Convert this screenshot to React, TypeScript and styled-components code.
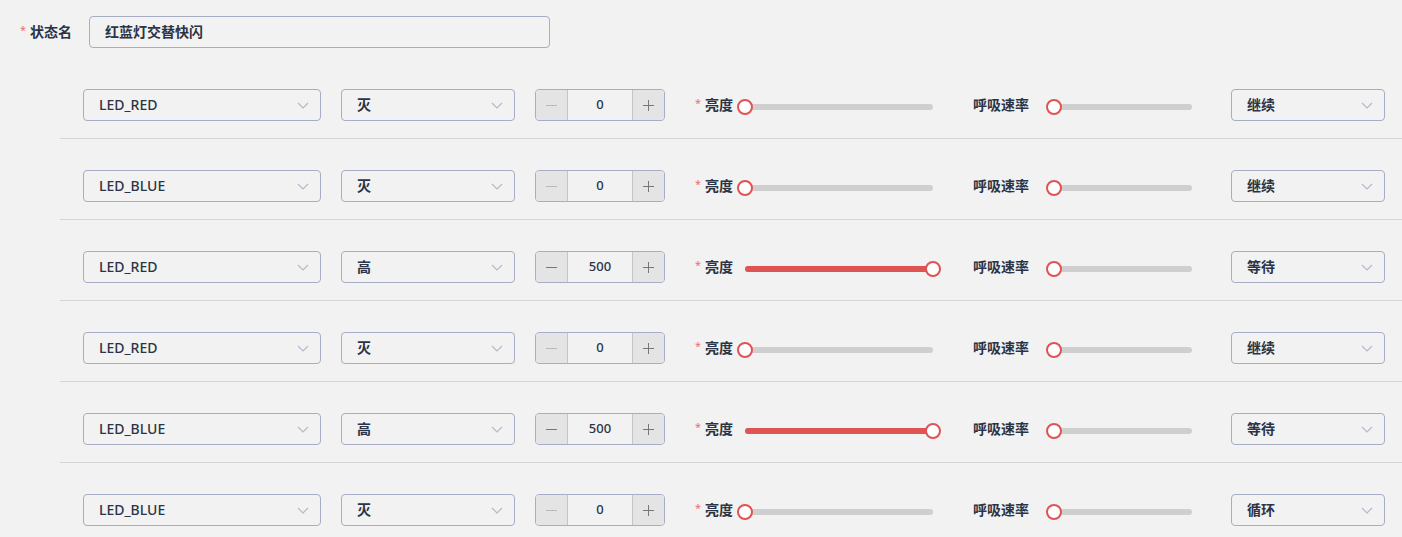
import React from "react";
import styled, { createGlobalStyle } from "styled-components";

const Global = createGlobalStyle`
  html, body { margin: 0; padding: 0; background: #f2f2f2; }
  body {
    font-family: "Noto Sans", "Noto Sans CJK SC", sans-serif;
    color: #2b3445;
    font-size: 14px;
  }
  * { box-sizing: border-box; }
`;

const Page = styled.div`
  padding-top: 16px;
  width: 1402px;
  height: 537px;
  overflow: hidden;
`;

const FormItem = styled.div`
  display: flex;
  align-items: center;
  padding-left: 20px;
`;

const Label = styled.label<{ $width?: number }>`
  display: flex;
  align-items: center;
  width: ${(p) => (p.$width ? `${p.$width}px` : "auto")};
  font-family: "Noto Sans CJK SC", sans-serif;
  font-weight: 700;
  font-size: 14px;
  line-height: 20px;
  color: #2b3445;
  white-space: nowrap;
  padding-bottom: 3px;
`;

const Star = styled.span`
  color: #f56c6c;
  font-size: 11px;
  width: 6px;
  margin-right: 4px;
  position: relative;
  top: -1px;
  font-family: "Noto Sans", sans-serif;
  font-weight: 400;
`;

const TextInput = styled.div`
  width: 461px;
  height: 32px;
  border: 1px solid #a7adc4;
  border-radius: 4px;
  padding: 0 15px 3px;
  display: flex;
  align-items: center;
  font-family: "Noto Sans CJK SC", sans-serif;
  font-weight: 700;
  font-size: 14px;
  color: #2b3445;
`;

const Rows = styled.div`
  margin-top: 10px;
  margin-left: 60px;
`;

const Row = styled.div`
  display: flex;
  align-items: center;
  padding: 31px 0 17px 23px;
  border-bottom: 1px solid #d6d6d6;
`;

const SelectBox = styled.div<{ $width: number; $gap?: number }>`
  width: ${(p) => p.$width}px;
  margin-left: ${(p) => p.$gap ?? 0}px;
  height: 32px;
  border: 1px solid #a7adc4;
  border-radius: 4px;
  padding: 0 11px 0 15px;
  display: flex;
  align-items: center;
  justify-content: space-between;
  flex-shrink: 0;
`;

const SelectText = styled.span`
  font-family: "Noto Sans", "Noto Sans CJK SC", sans-serif;
  font-weight: 500;
  font-size: 14px;
  color: #2b3445;
  padding-bottom: 2px;
`;

const CjkValue = styled(SelectText)`
  font-family: "Noto Sans CJK SC", sans-serif;
  font-weight: 700;
  padding-bottom: 3px;
`;

const Chevron = () => (
  <svg width="12" height="7" viewBox="0 0 12 7" fill="none">
    <path d="M1 1 L6 6 L11 1" stroke="#b3b8cc" strokeWidth="1.1" />
  </svg>
);

const Stepper = styled.div<{ $gap: number }>`
  margin-left: ${(p) => p.$gap}px;
  width: 130px;
  height: 32px;
  border: 1px solid #a7adc4;
  border-radius: 4px;
  display: flex;
  overflow: hidden;
  flex-shrink: 0;
`;

const StepButton = styled.div<{ $side: "left" | "right"; $disabled: boolean }>`
  width: 32px;
  background: #e4e4e4;
  display: flex;
  align-items: center;
  justify-content: center;
  color: ${(p) => (p.$disabled ? "#b8b8b8" : "#777777")};
  ${(p) => (p.$side === "left" ? "border-right: 1px solid #c4c4c4;" : "border-left: 1px solid #c4c4c4;")}
`;

const StepIcon = ({ plus }: { plus?: boolean }) => (
  <svg width="11" height="11" viewBox="0 0 11 11">
    <path d="M0 5.5 H11" stroke="currentColor" strokeWidth="1" />
    {plus && <path d="M5.5 0 V11" stroke="currentColor" strokeWidth="1" />}
  </svg>
);

const StepValue = styled.div`
  flex: 1;
  display: flex;
  align-items: center;
  justify-content: center;
  font-family: "Noto Sans", sans-serif;
  font-weight: 500;
  font-size: 13px;
  color: #2b3445;
  padding-bottom: 2px;
`;

const Field = styled.div<{ $gap: number }>`
  display: flex;
  align-items: center;
  margin-left: ${(p) => p.$gap}px;
  flex-shrink: 0;
`;

const Track = styled.div<{ $width: number; $gap: number }>`
  position: relative;
  width: ${(p) => p.$width}px;
  margin-left: ${(p) => p.$gap}px;
  height: 6px;
  border-radius: 3px;
  background: #cfcfcf;
  margin-top: 4px;
`;

const Fill = styled.div`
  position: absolute;
  left: 0;
  top: 0;
  bottom: 0;
  border-radius: 3px;
  background: #e05353;
`;

const Thumb = styled.div`
  position: absolute;
  top: 50%;
  width: 16px;
  height: 16px;
  border-radius: 50%;
  border: 2px solid #e05353;
  background: #fff;
  transform: translate(-50%, -50%);
`;

const Slider = ({ width, gap, pct }: { width: number; gap: number; pct: number }) => (
  <Track $width={width} $gap={gap}>
    <Fill style={{ width: `${pct}%` }} />
    <Thumb style={{ left: `${pct}%` }} />
  </Track>
);

type RowData = { led: string; state: string; value: number; action: string };

const rows: RowData[] = [
  { led: "LED_RED", state: "灭", value: 0, action: "继续" },
  { led: "LED_BLUE", state: "灭", value: 0, action: "继续" },
  { led: "LED_RED", state: "高", value: 500, action: "等待" },
  { led: "LED_RED", state: "灭", value: 0, action: "继续" },
  { led: "LED_BLUE", state: "高", value: 500, action: "等待" },
  { led: "LED_BLUE", state: "灭", value: 0, action: "循环" },
];

export default function App() {
  return (
    <>
      <Global />
      <Page>
        <FormItem>
          <Label $width={69}>
            <Star>*</Star>状态名
          </Label>
          <TextInput>红蓝灯交替快闪</TextInput>
        </FormItem>
        <Rows>
          {rows.map((r, i) => (
            <Row key={i}>
              <SelectBox $width={238}>
                <SelectText>{r.led}</SelectText>
                <Chevron />
              </SelectBox>
              <SelectBox $width={174} $gap={20}>
                <CjkValue>{r.state}</CjkValue>
                <Chevron />
              </SelectBox>
              <Stepper $gap={20}>
                <StepButton $side="left" $disabled={r.value === 0}>
                  <StepIcon />
                </StepButton>
                <StepValue>{r.value}</StepValue>
                <StepButton $side="right" $disabled={false}>
                  <StepIcon plus />
                </StepButton>
              </Stepper>
              <Field $gap={30}>
                <Label>
                  <Star>*</Star>亮度
                </Label>
                <Slider width={188} gap={12} pct={r.value > 0 ? 100 : 0} />
              </Field>
              <Field $gap={40}>
                <Label>呼吸速率</Label>
                <Slider width={138} gap={25} pct={0} />
              </Field>
              <SelectBox $width={154} $gap={39}>
                <CjkValue>{r.action}</CjkValue>
                <Chevron />
              </SelectBox>
            </Row>
          ))}
        </Rows>
      </Page>
    </>
  );
}
